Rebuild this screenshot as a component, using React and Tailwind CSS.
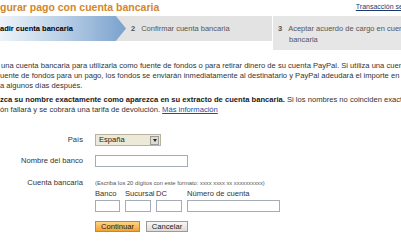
import React from 'react';

const FONT = { fontFamily: '"Liberation Sans", Arial, sans-serif' };

function TextInput({ className = '' }) {
    return <div className={`h-[12px] border border-[#a5acb5] bg-white ${className}`} />;
}

export default function App() {
    return (
        <div className="w-[401px] h-[241px] overflow-hidden bg-white text-[#333] relative" style={FONT}>
            {/* header */}
            <div className="flex items-start justify-between h-[16px]">
                <div className="text-[10.5px] leading-[14px] font-bold text-[#d4862a] whitespace-nowrap">
                    gurar pago con cuenta bancaria
                </div>
                <a className="text-[7px] leading-[10px] mt-[2px] mr-[-16px] text-[#1c3a70] underline whitespace-nowrap">
                    Transacción segura
                </a>
            </div>

            {/* steps */}
            <div className="flex items-start">
                <div className="relative flex h-[25px] w-[272px] shrink-0 bg-[#e3e3e3]">
                    <div className="w-[126px] h-full bg-gradient-to-r from-[#eef3f9] via-[#b9cfe6] to-[#7aa2cd] [clip-path:polygon(0_0,92%_0,100%_50%,92%_100%,0_100%)] flex items-center">
                        <span className="text-[7.5px] font-bold text-black whitespace-nowrap">adir cuenta bancaria</span>
                    </div>
                    <div className="flex items-center pl-[5px] text-[7.5px] text-[#555] whitespace-nowrap">
                        <b className="mr-[6px]">2</b>Confirmar cuenta bancaria
                    </div>
                </div>
                <div className="ml-[1px] h-[34px] min-w-0 flex-1 overflow-hidden bg-[#e6e6e6] pl-[5px] pt-[7px] text-[7.5px] leading-[11px] text-[#555] whitespace-nowrap">
                    <div><b className="mr-[6px]">3</b>Aceptar acuerdo de cargo en cuenta</div>
                    <div className="pl-[11px]">bancaria</div>
                </div>
            </div>

            {/* intro */}
            <div className="mt-[11px] text-[7.6px] leading-[10px] whitespace-nowrap">
                <div className="pl-[1px]">una cuenta bancaria para utilizarla como fuente de fondos o para retirar dinero de su cuenta PayPal. Si utiliza una cuenta bancaria</div>
                <div>uente de fondos para un pago, los fondos se enviarán inmediatamente al destinatario y PayPal adeudará el importe en su cuenta</div>
                <div>a algunos días después.</div>
            </div>
            <div className="mt-[4px] text-[7.6px] leading-[10px] whitespace-nowrap">
                <div>
                    <b className="text-[#222]">zca su nombre exactamente como aparezca en su extracto de cuenta bancaria.</b> Si los nombres no coinciden exactamente
                </div>
                <div>
                    ón fallará y se cobrará una tarifa de devolución. <a className="text-[#1c4fa0] underline">Más información</a>
                </div>
            </div>

            {/* form */}
            <div className="mt-[19px] grid grid-cols-[83px_1fr] gap-x-[12px] text-[7.6px] items-start">
                <div className="text-right leading-[12px]">País</div>
                <div className="flex h-[12px] w-[66px] items-center justify-between border border-[#b7b39f] bg-[#ece9d8] pl-[3px] pr-[1px]">
                    <span className="text-[7.6px] text-[#222]">España</span>
                    <span className="flex h-[9px] w-[9px] items-center justify-center border border-[#9b9b9b] bg-[#dedbd0]">
                        <span className="block h-0 w-0 border-x-[2.5px] border-t-[3px] border-x-transparent border-t-[#222]" />
                    </span>
                </div>

                <div className="mt-[9px] text-right leading-[12px]">Nombre del banco</div>
                <TextInput className="mt-[9px] w-[93px]" />

                <div className="mt-[10px] text-right leading-[12px]">Cuenta bancaria</div>
                <div className="mt-[10px]">
                    <div className="text-[5.8px] leading-[12px] text-[#555] whitespace-nowrap">
                        (Escriba los 20 dígitos con este formato: xxxx xxxx xx xxxxxxxxxx)
                    </div>
                    <div className="flex gap-[5px] leading-[9px] whitespace-nowrap">
                        <div className="w-[25px]">
                            <div>Banco</div>
                            <TextInput className="mt-[2px]" />
                        </div>
                        <div className="w-[26px]">
                            <div>Sucursal</div>
                            <TextInput className="mt-[2px]" />
                        </div>
                        <div className="w-[26px]">
                            <div>DC</div>
                            <TextInput className="mt-[2px]" />
                        </div>
                        <div className="w-[93px]">
                            <div>Número de cuenta</div>
                            <TextInput className="mt-[2px]" />
                        </div>
                    </div>
                    <div className="mt-[9px] flex gap-[6px]">
                        <button className="h-[11px] w-[45px] border border-[#c78a1c] bg-gradient-to-b from-[#fdd483] to-[#f3a12a] text-[7.6px] leading-[9px] text-[#222]">
                            Continuar
                        </button>
                        <button className="h-[11px] w-[42px] border border-[#9a9a9a] bg-gradient-to-b from-[#f7f7f7] to-[#dcdcdc] text-[7.6px] leading-[9px] text-[#222]">
                            Cancelar
                        </button>
                    </div>
                </div>
            </div>
        </div>
    );
}
